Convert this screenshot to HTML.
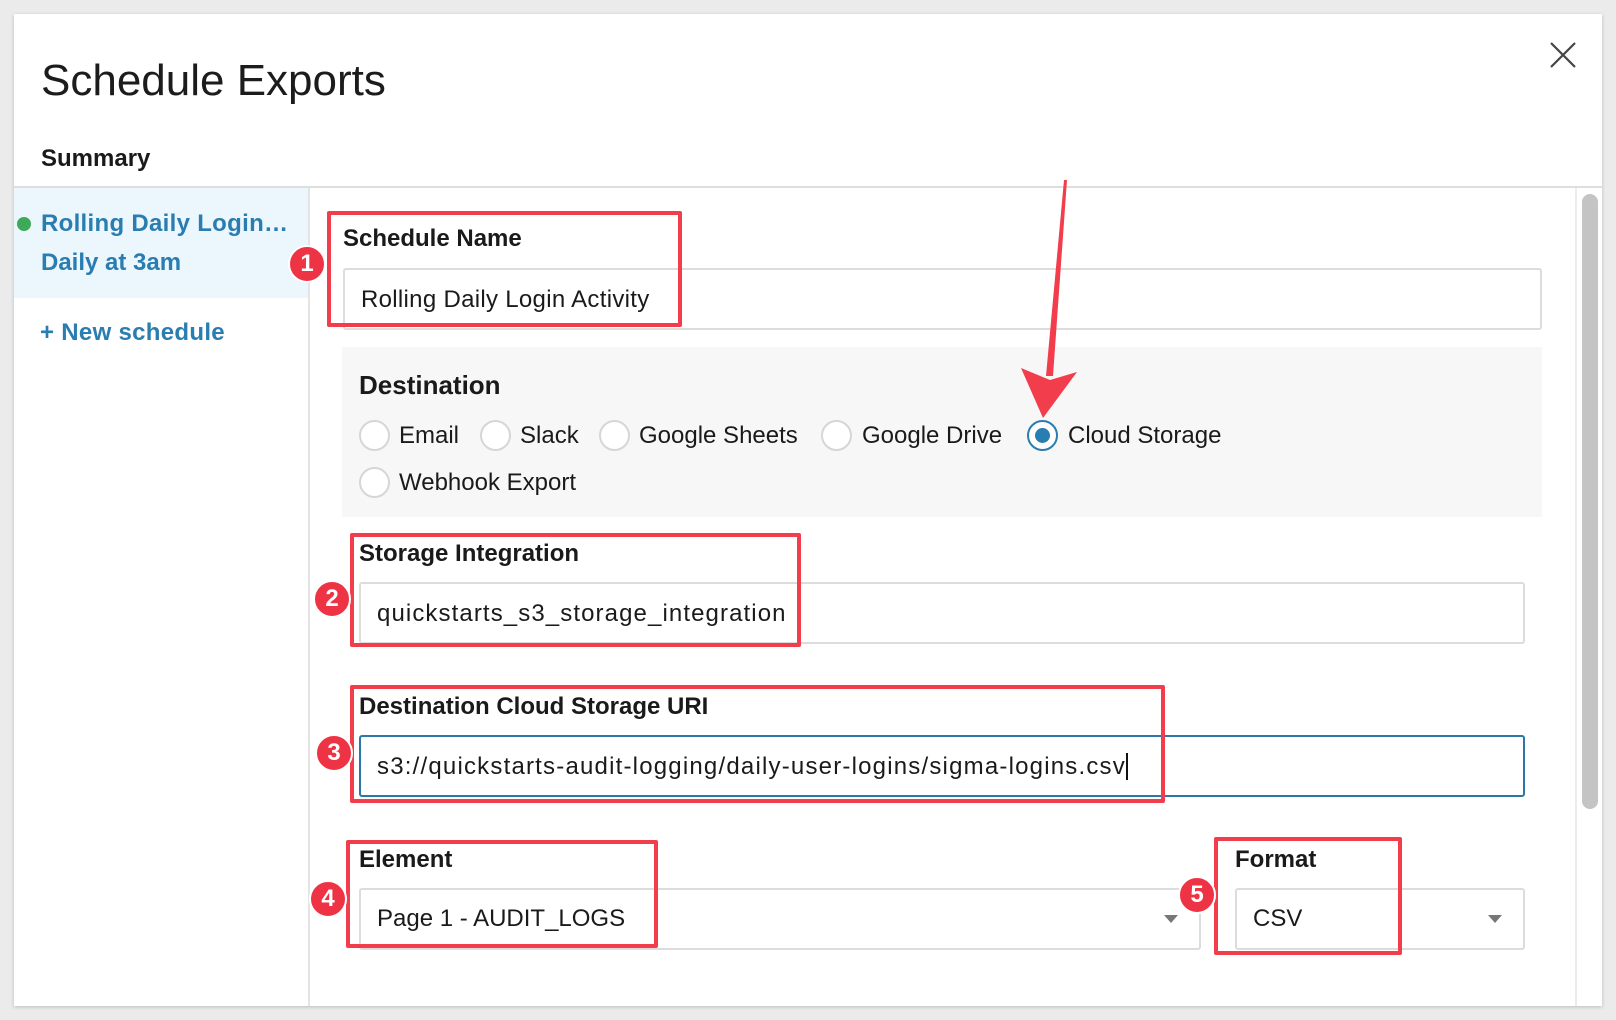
<!DOCTYPE html>
<html><head><meta charset="utf-8"><style>
*{box-sizing:border-box;margin:0;padding:0}
body{width:1616px;height:1020px;background:#ebebeb;font-family:"Liberation Sans",sans-serif;color:#1a1a1a;position:relative;overflow:hidden}
.a{position:absolute;white-space:nowrap}
.dlg{position:absolute;left:14px;top:14px;width:1588px;height:992px;background:#fff;box-shadow:0 1px 4px rgba(0,0,0,.2)}
.lbl{font-weight:bold;font-size:24px;line-height:28px}
.inp{position:absolute;border:2px solid #dcdcdc;border-radius:3px;background:#fff}
.txt{font-size:24px;line-height:28px}
.red{position:absolute;border:4px solid #f23d4c;border-radius:2px}
.badge{position:absolute;width:38px;height:38px;border-radius:50%;background:#ee3444;color:#fff;font-weight:bold;font-size:24px;line-height:34px;text-align:center;border:2px solid #fff}
.rad{position:absolute;width:31px;height:31px;border-radius:50%;border:2px solid #d6d6d6;background:#fff}
.arr{position:absolute;width:0;height:0;border-left:7px solid transparent;border-right:7px solid transparent;border-top:8px solid #777}
</style></head><body>
<div class="dlg"></div>
<div class="a" style="left:41px;top:54px;font-size:44px;line-height:54px;color:#1c1c1c">Schedule Exports</div>
<svg class="a" style="left:1549px;top:41px" width="28" height="28" viewBox="0 0 28 28"><path d="M2 2L26 26M26 2L2 26" stroke="#444" stroke-width="2.2"/></svg>
<div class="a lbl" style="left:41px;top:145px;font-size:24px">Summary</div>
<div class="a" style="left:14px;top:186px;width:1588px;height:2px;background:#dedede"></div>
<div class="a" style="left:14px;top:188px;width:295px;height:110px;background:#ebf6fd"></div>
<div class="a" style="left:308px;top:188px;width:2px;height:818px;background:#e4e4e4"></div>
<div class="a" style="left:17px;top:217px;width:14px;height:14px;border-radius:50%;background:#3fa95a"></div>
<div class="a" style="left:41px;top:210px;font-size:24px;line-height:28px;color:#2a7db0;font-weight:bold;letter-spacing:0.3px">Rolling Daily Login…</div>
<div class="a" style="left:41px;top:249px;font-size:24px;line-height:28px;color:#2a7db0;font-weight:bold">Daily at 3am</div>
<div class="a" style="left:40px;top:319px;font-size:24px;line-height:28px;color:#2a7db0;font-weight:bold;letter-spacing:0.3px">+ New schedule</div>
<div class="a" style="left:1575px;top:188px;width:2px;height:818px;background:#ececec"></div>
<div class="a" style="left:1582px;top:194px;width:16px;height:615px;border-radius:8px;background:#c4c4c4"></div>

<div class="a lbl" style="left:343px;top:225px">Schedule Name</div>
<div class="inp" style="left:343px;top:268px;width:1199px;height:62px"></div>
<div class="a txt" style="left:361px;top:286px;letter-spacing:0.3px">Rolling Daily Login Activity</div>

<div class="a" style="left:342px;top:347px;width:1200px;height:170px;background:#f7f7f7"></div>
<div class="a lbl" style="left:359px;top:371px;font-size:26px">Destination</div>
<div class="rad" style="left:359px;top:420px"></div><div class="a txt" style="left:399px;top:422px">Email</div>
<div class="rad" style="left:480px;top:420px"></div><div class="a txt" style="left:520px;top:422px">Slack</div>
<div class="rad" style="left:599px;top:420px"></div><div class="a txt" style="left:639px;top:422px">Google Sheets</div>
<div class="rad" style="left:821px;top:420px"></div><div class="a txt" style="left:862px;top:422px">Google Drive</div>
<div class="rad" style="left:1027px;top:420px;border-color:#2a7db0"><div style="position:absolute;left:6px;top:6px;width:15px;height:15px;border-radius:50%;background:#2a7db0"></div></div><div class="a txt" style="left:1068px;top:422px">Cloud Storage</div>
<div class="rad" style="left:359px;top:467px"></div><div class="a txt" style="left:399px;top:469px">Webhook Export</div>

<div class="a lbl" style="left:359px;top:540px">Storage Integration</div>
<div class="inp" style="left:359px;top:582px;width:1166px;height:62px"></div>
<div class="a txt" style="left:377px;top:600px;letter-spacing:1.1px">quickstarts_s3_storage_integration</div>

<div class="a lbl" style="left:359px;top:693px">Destination Cloud Storage URI</div>
<div class="inp" style="left:359px;top:735px;width:1166px;height:62px;border-color:#2b78a8"></div>
<div class="a txt" style="left:377px;top:753px;letter-spacing:1.2px">s3://quickstarts-audit-logging/daily-user-logins/sigma-logins.csv<span style="border-left:2px solid #111;margin-left:0"></span></div>

<div class="a lbl" style="left:359px;top:846px">Element</div>
<div class="inp" style="left:359px;top:888px;width:842px;height:62px"></div>
<div class="a txt" style="left:377px;top:905px">Page 1 - AUDIT_LOGS</div>
<div class="arr" style="left:1164px;top:915px"></div>
<div class="a lbl" style="left:1235px;top:846px">Format</div>
<div class="inp" style="left:1235px;top:888px;width:290px;height:62px"></div>
<div class="a txt" style="left:1253px;top:905px">CSV</div>
<div class="arr" style="left:1488px;top:915px"></div>

<div class="red" style="left:327px;top:211px;width:355px;height:116px"></div>
<div class="red" style="left:350px;top:533px;width:451px;height:114px"></div>
<div class="red" style="left:350px;top:685px;width:815px;height:118px"></div>
<div class="red" style="left:346px;top:840px;width:312px;height:108px"></div>
<div class="red" style="left:1214px;top:837px;width:188px;height:118px"></div>
<div class="badge" style="left:288px;top:245px">1</div>
<div class="badge" style="left:313px;top:580px">2</div>
<div class="badge" style="left:315px;top:734px">3</div>
<div class="badge" style="left:309px;top:880px">4</div>
<div class="badge" style="left:1178px;top:876px">5</div>

<svg class="a" style="left:0;top:0" width="1616" height="1020"><path d="M1067 180L1064 180L1046 376L1053 376Z" fill="#f23d4c"/><path d="M1021 368L1043 418L1077 372L1050 380Z" fill="#f23d4c"/></svg>
</body></html>
